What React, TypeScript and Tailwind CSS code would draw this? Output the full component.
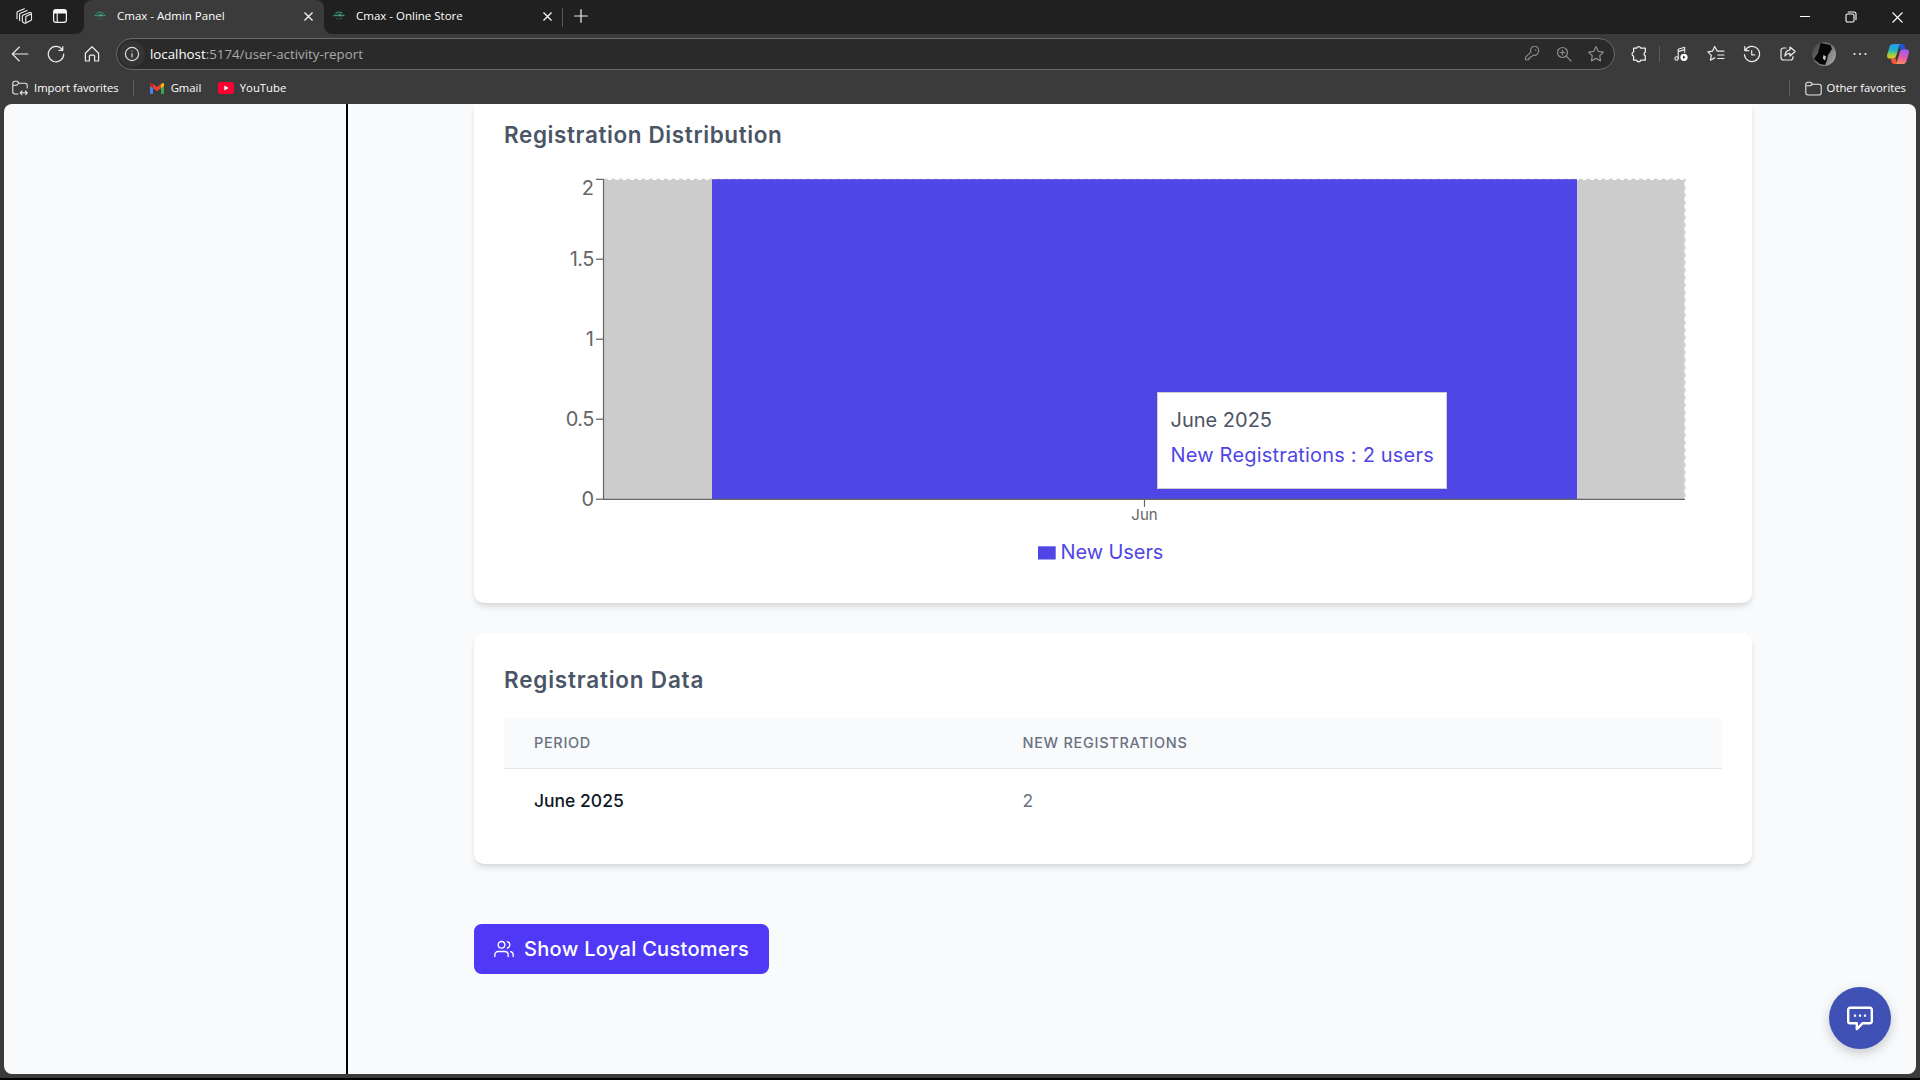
import React from "react";
import type { ReactNode } from "react";
import { FiUsers } from "react-icons/fi";

function Icon({
  size = 20,
  sw = 1.1,
  className = "",
  children,
}: {
  size?: number;
  sw?: number;
  className?: string;
  children: ReactNode;
}) {
  return (
    <svg
      width={size}
      height={size}
      viewBox={`0 0 ${size} ${size}`}
      fill="none"
      stroke="currentColor"
      strokeWidth={sw}
      strokeLinecap="round"
      strokeLinejoin="round"
      className={`shrink-0 ${className}`}
    >
      {children}
    </svg>
  );
}

function Cell({ children, className = "w-9" }: { children: ReactNode; className?: string }) {
  return <div className={`flex shrink-0 items-center justify-center ${className}`}>{children}</div>;
}

function Favicon() {
  return (
    <svg width="16" height="16" viewBox="0 0 16 16" className="shrink-0" fill="none">
      <path d="M4.5 5.5Q8 3 11.5 5.5" stroke="#2a7f68" strokeWidth="1.3" />
      <path d="M2.5 7.5H7M9.5 7.5H13.5" stroke="#2f9478" strokeWidth="1.5" />
      <circle cx="8.6" cy="7.2" r="1.2" fill="#5fa595" />
      <path d="M5.5 10.2l2 1M9 11.2l2-1.2" stroke="#25685a" strokeWidth="1.1" />
    </svg>
  );
}

function CloseX({ size = 8 }: { size?: number }) {
  return (
    <svg width={size} height={size} viewBox="0 0 10 10" stroke="#f2f2f2" strokeWidth="1.5" className="shrink-0">
      <path d="M0.5 0.5L9.5 9.5M9.5 0.5L0.5 9.5" />
    </svg>
  );
}

function Tab({ title, active }: { title: string; active?: boolean }) {
  return (
    <div className={`relative flex h-[34px] items-center ${active ? "w-60 rounded-t-lg bg-[#3b3b3b] pl-2" : "w-[238px] pl-[7px]"}`}>
      {active && (
        <>
          <svg width="8" height="8" viewBox="0 0 8 8" className="absolute bottom-0 -left-2">
            <path d="M8 0V8H0A8 8 0 0 0 8 0Z" fill="#3b3b3b" />
          </svg>
          <svg width="8" height="8" viewBox="0 0 8 8" className="absolute -right-2 bottom-0">
            <path d="M0 0V8H8A8 8 0 0 1 0 0Z" fill="#3b3b3b" />
          </svg>
        </>
      )}
      <div className="pb-[3px]">
        <Favicon />
      </div>
      <span className="ml-[9px] pb-[3px] text-[11.5px] leading-4 text-white">{title}</span>
      <span className={`ml-auto pb-px ${active ? "pr-[11px]" : "pr-2.5"}`}>
        <CloseX size={9} />
      </span>
    </div>
  );
}

function TitleBar() {
  return (
    <div className="flex h-[34px] bg-[#202020] pl-1.5">
      <Cell>
        <Icon size={18} className="-mt-0.5 text-[#f0f0f0]">
          <path d="M8 8.2L14.5 5.6Q16.5 5 16.5 7V12.2Q16.5 13.2 15.6 13.6L11 16Q10 16.4 9.2 16L8 15.2Q7.3 14.8 7.3 13.8V9.2Q7.3 8.5 8 8.200ZM10.800 9.500V16M10.800 9.500L16 7" />
          <path d="M4.600 13.600V7.400Q4.600 6.600 5.400 6.200L12 3.500M2 11.800V5.600Q2 4.800 2.800 4.400L9.400 1.700" />
        </Icon>
      </Cell>
      <Cell>
        <svg width="14" height="14" viewBox="0 0 14 14" className="-mt-0.5 text-[#f5f5f5]">
          <rect x="0.6" y="0.6" width="12.8" height="12.8" rx="2.4" fill="none" stroke="currentColor" strokeWidth="1.2" />
          <path d="M0.6 4.4V3A2.4 2.4 0 0 1 3 0.6H11A2.4 2.4 0 0 1 13.4 3V4.4Z" fill="currentColor" />
          <path d="M4.2 4V13" stroke="currentColor" strokeWidth="1.1" />
        </svg>
      </Cell>
      <div className="ml-1.5 flex">
        <Tab title="Cmax - Admin Panel" active />
        <Tab title="Cmax - Online Store" />
      </div>
      <div className="mt-2 h-[19px] w-px bg-[#5a5a5a]" />
      <Cell className="w-[35px]">
        <Icon size={14} sw={1.2} className="-mt-0.5 text-[#f0f0f0]">
          <path d="M7 0.7V13.3M0.7 7H13.3" />
        </Icon>
      </Cell>
      <div className="ml-auto flex">
        <Cell className="w-[46px]">
          <div className="mb-px h-px w-[10px] bg-white" />
        </Cell>
        <Cell className="w-[46px]">
          <Icon size={12} className="text-white">
            <rect x="1" y="3" width="8" height="8" rx="1.4" />
            <path d="M3.2 1H9a2 2 0 0 1 2 2V8.8" />
          </Icon>
        </Cell>
        <Cell className="w-[46px]">
          <svg width="11" height="11" viewBox="0 0 11 11" stroke="#fff" strokeWidth="1.1">
            <path d="M0.5 0.5L10.5 10.5M10.5 0.5L0.5 10.5" />
          </svg>
        </Cell>
      </div>
    </div>
  );
}

function Copilot() {
  return (
    <svg width="24" height="24" viewBox="0 0 24 24">
      <defs>
        <linearGradient id="cpL" x1="0" y1="0" x2="0" y2="1">
          <stop offset="0" stopColor="#1f9bf0" />
          <stop offset="0.45" stopColor="#25b3c4" />
          <stop offset="0.7" stopColor="#8fcf4a" />
          <stop offset="1" stopColor="#f3c21b" />
        </linearGradient>
        <linearGradient id="cpR" x1="0.3" y1="0" x2="0" y2="1">
          <stop offset="0" stopColor="#a65bf0" />
          <stop offset="0.5" stopColor="#ee5d9a" />
          <stop offset="1" stopColor="#ff9a4a" />
        </linearGradient>
      </defs>
      <path d="M13 2h3.2c1.3 0 2 .9 2.4 2.2l1 3.3H14z" fill="#1f55d8" />
      <path d="M11 22H8c-1.3 0-2-.9-2.4-2.2l-1-3.3H10z" fill="#ef5a3c" />
      <path d="M7.6 2H15c-1 0-1.7.8-2 2L10.3 13.5c-.5 2-1.5 3-3.3 3H3.6C1.5 16.5.6 15 1.2 12.8L3.6 4.6C4.1 3 5.5 2 7.6 2z" fill="url(#cpL)" />
      <path d="M16.4 22H9c1 0 1.7-.8 2-2l2.7-9.5c.5-2 1.5-3 3.3-3h3.4c2.1 0 3 1.5 2.4 3.7l-2.4 8.2c-.5 1.6-1.9 2.6-4 2.6z" fill="url(#cpR)" />
    </svg>
  );
}

function Toolbar() {
  return (
    <div className="flex h-10 items-center bg-[#3b3b3b] pl-0.5 text-[#ececec]">
      <Cell>
        <Icon size={18}>
          <path d="M17 9H1.5M8.3 2L1.3 9l7 7" />
        </Icon>
      </Cell>
      <Cell>
        <Icon size={18} sw={1.2}>
          <path d="M15.3 4.7A7.7 7.7 0 1 0 16.7 9M15.8 1.5V5.3H12" />
        </Icon>
      </Cell>
      <Cell>
        <Icon size={18} sw={1.2}>
          <path d="M2.4 8.2L9 1.8l6.6 6.4V16h-4v-4.8a1 1 0 0 0-1-1H7.4a1 1 0 0 0-1 1V16h-4z" />
        </Icon>
      </Cell>
      <div className="ml-1.5 flex h-8 flex-1 items-center rounded-full border border-[#6b6b6b] bg-[#2a2a2a] pr-0.5">
        <div className="ml-0.5 flex h-[26px] w-[26px] items-center justify-center rounded-full bg-[#343434]">
          <Icon size={16} sw={1.2} className="text-[#dcdcdc]">
            <circle cx="8" cy="8" r="6.6" />
            <path d="M8 7.5V11M8 5v.1" />
          </Icon>
        </div>
        <span className="ml-[5px] text-[13.3px] leading-5 text-[#ababab]">
          <span className="text-white">localhost</span>:5174/user-activity-report
        </span>
        <div className="ml-auto flex text-[#8d8d8d]">
          <Cell className="w-8">
            <Icon size={16}>
              <path d="M14.5 5.3a4 4 0 0 1-5.3 3.8L7.6 10.7H6.2v1.5H4.7v1.5H1.5v-2.4L7 5.900A4 4 0 1 1 14.5 5.3z" />
              <path d="M11.7 4.2v.1" strokeWidth="1.5" />
            </Icon>
          </Cell>
          <Cell className="w-8">
            <Icon size={16} sw={1.2}>
              <circle cx="6.5" cy="6.5" r="5" />
              <path d="M10.2 10.2L15 15M6.5 4.2v4.6M4.2 6.5h4.6" />
            </Icon>
          </Cell>
          <Cell className="w-8">
            <Icon size={18} sw={1.2}>
              <path d="M9 1.6l2.3 4.8 5.2.7-3.8 3.6.9 5.2L9 13.4l-4.6 2.5.9-5.2L1.5 7.1l5.2-.7z" />
            </Icon>
          </Cell>
        </div>
      </div>
      <Cell className="ml-2 w-8">
        <Icon size={18} sw={1.3}>
          <path d="M6.6 3.2a2.2 2.2 0 0 1 4.2 0h4.5v4a1.9 1.9 0 0 0 0 3.600v4.4h-4.5a2.2 2.2 0 0 1-4.2 0H3.6v-4a2.2 2.2 0 0 1 0-4.200V3.2z" />
        </Icon>
      </Cell>
      <Cell className="w-[9px]">
        <div className="h-4 w-px bg-[#5c5c5c]" />
      </Cell>
      <Cell className="w-[34px]">
        <Icon size={16}>
          <path d="M5.2 12.5V3.2l6.5-2v5M5.2 5.6l6.5-2" />
          <circle cx="3.6" cy="12.5" r="1.7" />
          <circle cx="11" cy="11.3" r="3.6" fill="#fff" stroke="none" />
          <path d="M10 9.6l2.7 1.7L10 13z" fill="#3b3b3b" stroke="none" />
        </Icon>
      </Cell>
      <Cell>
        <Icon size={18} sw={1.2}>
          <path d="M10.8 5.9L9.9 5.6 7.6 1.5 5.5 6.2l-4.6.7 3.4 3.4-.8 4.9 4.2-2.3M10.8 6.2H17M10.8 10H17M10.8 13.5H17" />
        </Icon>
      </Cell>
      <Cell>
        <Icon size={18} sw={1.2}>
          <path d="M2.2 5.5A7.6 7.6 0 1 1 1.4 9.5M1.8 1.6V5.6H5.8M8.7 5.5V9.8h3" />
        </Icon>
      </Cell>
      <Cell>
        <Icon size={18} sw={1.2}>
          <path d="M7 3H4.5a2.5 2.5 0 0 0-2.5 2.5v7A2.5 2.5 0 0 0 4.5 15h7a2.5 2.5 0 0 0 2.5-2.5v-1" />
          <path d="M11 2l5.2 4.5L11 11V8.4c-2.2 0-3.9.8-5.2 2.6.3-3.4 2-5.7 5.2-6.2z" />
        </Icon>
      </Cell>
      <Cell>
        <svg width="24" height="24" viewBox="0 0 24 24">
          <defs>
            <linearGradient id="av" x1="0" y1="0" x2="1" y2="0.6">
              <stop offset="0" stopColor="#3a3a3a" />
              <stop offset="1" stopColor="#9b9b9b" />
            </linearGradient>
            <clipPath id="avc">
              <circle cx="12" cy="12" r="12" />
            </clipPath>
          </defs>
          <g clipPath="url(#avc)">
            <rect width="24" height="24" fill="url(#av)" />
            <path d="M8.5 1L18.5 3l1.5 4-4 6-1 5-2 5-5-1-6-5 4-6z" fill="#060606" />
            <path d="M11.5 13l2.5 1.500-1 4-2.200-2z" fill="#c9c9c9" />
          </g>
        </svg>
      </Cell>
      <Cell>
        <Icon size={16} sw={2.2}>
          <path d="M2.5 8h.01M8 8h.01M13.5 8h.01" />
        </Icon>
      </Cell>
      <Cell className="mr-0.5 w-10">
        <Copilot />
      </Cell>
    </div>
  );
}

function FavoritesBar() {
  return (
    <div className="flex h-[30px] items-center bg-[#3b3b3b] pr-3.5 pb-0.5 pl-3 text-[11.3px] leading-4 text-white">
      <Icon size={16} className="text-[#e6e6e6]">
        <path d="M6 14H3A2.2 2.2 0 0 1 .8 11.8V3.2A2 2 0 0 1 2.8 1.2H5.2L7 3.2H13A2.2 2.2 0 0 1 15.2 5.4V8M.8 5.2H4.8L7 3.2M8.5 12.8H15M10 11l-1.8 1.8L10 14.6M13.5 11l1.8 1.8-1.8 1.8" />
      </Icon>
      <span className="ml-[6px]">Import favorites</span>
      <div className="ml-[14px] h-4 w-px bg-[#5c5c5c]" />
      <svg width="14" height="11" viewBox="0 0 14 11" className="ml-4">
        <path d="M0 1.5V10a1 1 0 0 0 1 1H3V4.5z" fill="#4285f4" />
        <path d="M14 1.5V10a1 1 0 0 1-1 1H11V4.5z" fill="#34a853" />
        <path d="M11 1L12.3.3C13.2-.2 14 .4 14 1.4V3L11 5.3z" fill="#fbbc04" />
        <path d="M3 1L7 4l4-3v4.3L7 8.3 3 5.3z" fill="#ea4335" />
        <path d="M3 1L1.7.3C.8-.2 0 .4 0 1.4V3L3 5.3z" fill="#c5221f" />
      </svg>
      <span className="ml-[7px]">Gmail</span>
      <svg width="16" height="12" viewBox="0 0 16 12" className="ml-[17px]">
        <rect width="16" height="12" rx="3" fill="#ff0033" />
        <path d="M6.3 3.4L10.7 6l-4.4 2.6z" fill="#fff" />
      </svg>
      <span className="ml-[5.5px]">YouTube</span>
      <div className="ml-auto h-4 w-px bg-[#5c5c5c]" />
      <Icon size={17} className="ml-[15px] text-[#e6e6e6]">
        <path d="M.8 4.2A2 2 0 0 1 2.8 2.2H5.5L7.5 4.2H14A2.2 2.2 0 0 1 16.2 6.4V12.8A2.2 2.2 0 0 1 14 15H3A2.2 2.2 0 0 1 .8 12.8zM.8 5.8H5.5L7.5 4.2" />
      </Icon>
      <span className="ml-[5px]">Other favorites</span>
    </div>
  );
}

const yTicks = [
  { label: "2", y: 179.3, text: 194.5 },
  { label: "1.5", y: 259.2, text: 266 },
  { label: "1", y: 339.2, text: 346 },
  { label: "0.5", y: 419.2, text: 426 },
  { label: "0", y: 499.2, text: 506 },
];

function Chart() {
  return (
    <div className="relative h-[410px]">
      <svg width="1218" height="410" viewBox="504 163 1218 410" className="block font-[Inter,sans-serif]">
        <rect x="604" y="179.2" width="1081" height="320" fill="#cccccc" />
        <path d="M604 179.3H1685V499.3" fill="none" stroke="#fff" strokeWidth="1.25" />
        <path d="M604 179.3H1685V499.3" fill="none" stroke="#cccccc" strokeWidth="1.25" strokeDasharray="3.75 3.75" />
        <rect x="712" y="179.2" width="865" height="320" fill="#4f46e5" />
        <path d="M603.5 179V499.4H1685M1144.5 499.4V506.8" fill="none" stroke="#666" strokeWidth="1.2" />
        {yTicks.map((t) => (
          <g key={t.label}>
            <path d={`M596 ${t.y}H603.5`} stroke="#666" strokeWidth="1.25" />
            <text
              x="594"
              y={t.text}
              textAnchor="end"
              fontSize="20"
              letterSpacing={t.label.length > 1 ? "-0.5" : "0"}
              fill="#666"
            >
              {t.label}
            </text>
          </g>
        ))}
        <text x="1144.5" y="520" textAnchor="middle" fontSize="15" fill="#666">
          Jun
        </text>
        <rect x="1038" y="546.3" width="17.7" height="13.2" fill="#4f46e5" />
        <text x="1060.5" y="559" fontSize="20" letterSpacing="-0.08" fill="#4f46e5">
          New Users
        </text>
      </svg>
      <div className="absolute top-[228.5px] left-[653px] h-[97.5px] w-[290px] border border-[#cccccc] bg-white pt-2.5 pl-[12.5px] text-[20px] leading-[35px] whitespace-nowrap">
        <p className="text-[#4a5565]">June 2025</p>
        <p className="tracking-[0.19px] text-[#4f46e5]">New Registrations : 2 users</p>
      </div>
    </div>
  );
}

const cardShadow = "shadow-[0_5px_7.5px_-1px_rgba(0,0,0,0.1),0_2.5px_5px_-2.5px_rgba(0,0,0,0.1)]";

function Report() {
  return (
    <main className="flex-1 pl-[126px] font-[Inter,sans-serif]">
      <section className={`w-[1278px] rounded-b-[10px] bg-white px-[30px] pt-3.5 pb-[30px] ${cardShadow}`}>
        <h2 className="mb-[11px] text-[22.5px] leading-[34px] font-semibold tracking-[0.61px] text-[#4a5565]">
          Registration Distribution
        </h2>
        <Chart />
      </section>

      <section className={`mt-[30px] w-[1278px] rounded-[10px] bg-white p-[30px] ${cardShadow}`}>
        <h2 className="mb-[21px] text-[22.5px] leading-[34px] font-semibold tracking-[0.79px] text-[#4a5565]">
          Registration Data
        </h2>
        <div className="flex h-[51px] items-center border-b border-gray-200 bg-[#f9fafc] pb-px pl-[30px] text-[14.5px] leading-5 font-medium text-[#6a7282]">
          <div className="w-[488.5px] tracking-[0.65px]">PERIOD</div>
          <div className="tracking-[0.7px]">NEW REGISTRATIONS</div>
        </div>
        <div className="flex h-[65px] items-center pb-0.5 pl-[30px] text-[17.5px] leading-[25px]">
          <div className="w-[488.5px] font-medium text-[#101828]">June 2025</div>
          <div className="text-[#6a7282]">2</div>
        </div>
      </section>

      <button className="mt-[60px] flex h-[50px] w-[295px] items-center gap-2.5 rounded-[7.5px] bg-[#4f39f6] pl-5 text-[20px] font-[450] tracking-[0.31px] whitespace-nowrap text-white">
        <FiUsers size={20} strokeWidth={1.6} className="shrink-0" />
        Show Loyal Customers
      </button>
    </main>
  );
}

export default function App() {
  return (
    <div className="h-[1080px] w-[1920px] overflow-hidden bg-black font-['Open_Sans',sans-serif]">
      <TitleBar />
      <Toolbar />
      <FavoritesBar />
      <div className="h-[974px] bg-[#3b3b3b] px-1 pb-1">
        <div className="relative flex h-[970px] overflow-hidden rounded-lg bg-[#f9fafc]">
          <aside className="w-[344px] border-r-2 border-black" />
          <Report />
          <div className="absolute right-[25px] bottom-[25px] flex h-[62px] w-[62px] items-center justify-center rounded-full bg-[#3f51b5] shadow-[0_4px_12px_rgba(0,0,0,0.2)]">
            <svg width="26" height="26" viewBox="0 0 26 26" fill="none" stroke="#fff" strokeWidth="2.4" strokeLinejoin="round">
              <path d="M3 2.7H23A1.8 1.8 0 0 1 24.8 4.5V16.5A1.8 1.8 0 0 1 23 18.3H15.5L9.8 24.2V18.3H3A1.8 1.8 0 0 1 1.2 16.5V4.5A1.8 1.8 0 0 1 3 2.7Z" />
              <path d="M6.9 10.6h2.2M11.9 10.6h2.2M16.9 10.6h2.2" strokeWidth="2.2" />
            </svg>
          </div>
        </div>
      </div>
    </div>
  );
}
